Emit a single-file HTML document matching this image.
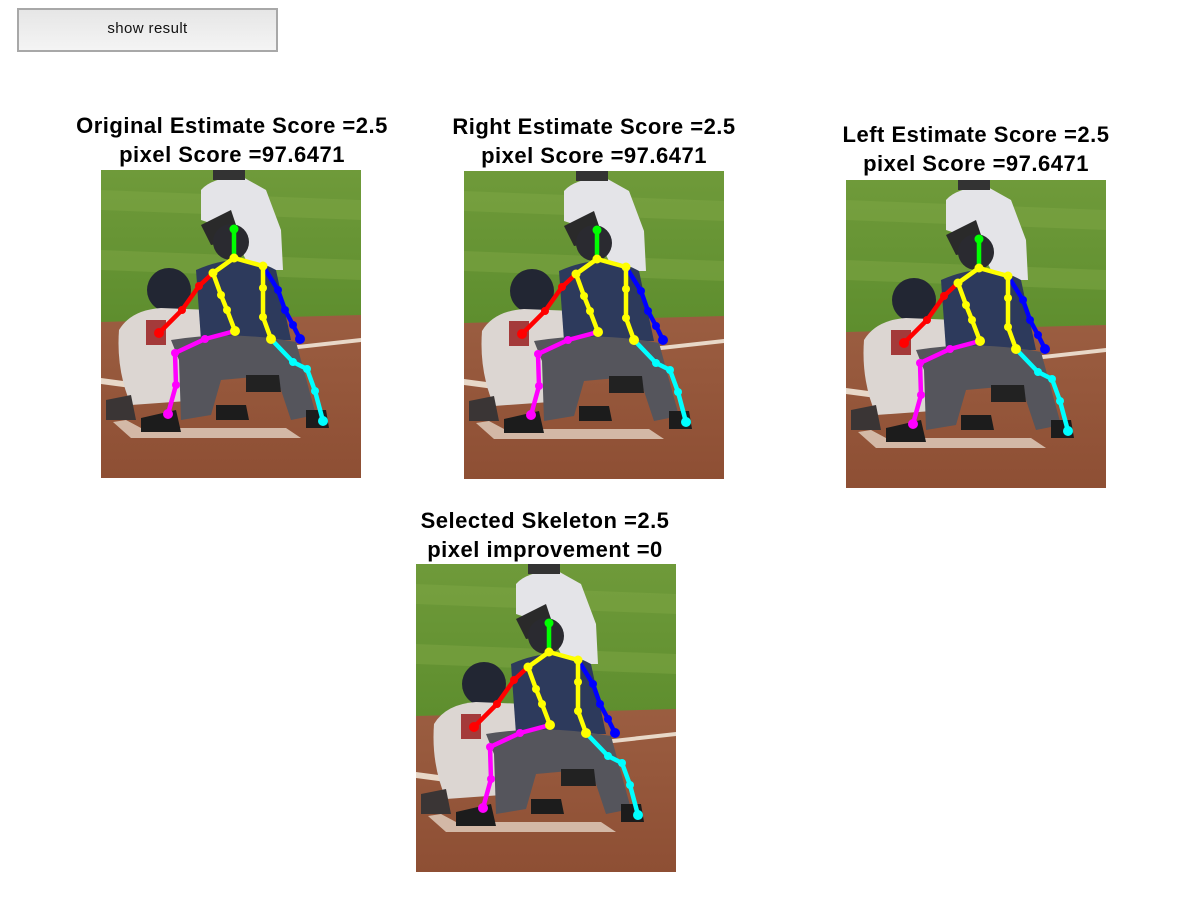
<!DOCTYPE html>
<html><head><meta charset="utf-8"><style>
body{margin:0;width:1200px;height:900px;background:#fff;position:relative;overflow:hidden;font-family:"Liberation Sans",Arial,sans-serif}
.btn{position:absolute;left:17px;top:8px;width:257px;height:40px;border:2px solid #a8a8a8;background:linear-gradient(#e6e6e6,#f4f4f4);font-size:15px;letter-spacing:0.4px;text-align:center;line-height:38px;color:#111}
.t{position:absolute;width:400px;text-align:center;font-weight:bold;font-size:22px;letter-spacing:0.5px;line-height:29px;color:#000}
svg.p{position:absolute;width:260px;height:308px}
</style></head><body>
<div class="btn">show result</div>
<svg width="0" height="0" style="position:absolute"><defs>
<symbol id="img" viewBox="0 0 260 308">
<defs>
<linearGradient id="gr" x1="0" y1="0" x2="0" y2="1"><stop offset="0" stop-color="#6f9a3a"/><stop offset="1" stop-color="#5e8e2e"/></linearGradient>
<linearGradient id="dr" x1="0" y1="0" x2="0" y2="1"><stop offset="0" stop-color="#a66a4c"/><stop offset="1" stop-color="#8e4f34"/></linearGradient>
</defs>
<rect width="260" height="308" fill="url(#dr)"/>
<path d="M0 0 H260 V145 L0 152Z" fill="url(#gr)"/>
<path d="M0 20 L260 30 L260 50 L0 40Z" fill="#7ea644" opacity=".5"/>
<path d="M0 80 L260 90 L260 110 L0 100Z" fill="#7ea644" opacity=".5"/>
<path d="M170 178 L260 168 L260 172 L170 182Z" fill="#e8d8c8"/>
<path d="M0 208 L30 212 L30 218 L0 214Z" fill="#e8d8c8"/>
<path d="M12 252 L30 268 L200 268 L185 258 L40 258 L25 250Z" fill="#e4d2c2" opacity=".8"/>
<path d="M100 20 Q110 8 140 6 L165 20 L180 60 L182 100 L150 100 L130 60 L100 50Z" fill="#e4e4e8"/>
<rect x="112" y="0" width="32" height="10" fill="#333"/>
<path d="M100 55 L130 40 L140 70 L110 75Z" fill="#2a2a2a"/>
<circle cx="68" cy="120" r="22" fill="#222633"/>
<path d="M18 160 Q30 140 60 138 L110 140 L100 230 L30 235 Q15 200 18 160Z" fill="#dcd6d2"/>
<path d="M45 150 L65 150 L65 175 L45 175Z" fill="#a43a3a"/>
<path d="M5 230 L30 225 L35 250 L5 250Z" fill="#3a3535"/>
<path d="M95 100 Q140 80 175 100 L190 170 L100 170Z" fill="#2d3a5c"/>
<circle cx="130" cy="72" r="18" fill="#2a2a30"/>
<path d="M70 170 Q130 160 195 172 L215 245 L190 250 L175 205 L120 210 L110 245 L80 250 L78 190Z" fill="#55555c"/>
<path d="M40 248 L75 240 L80 262 L40 262Z" fill="#1c1c1c"/>
<path d="M115 235 L145 235 L148 250 L115 250Z" fill="#1c1c1c"/>
<path d="M145 205 L178 205 L180 222 L145 222Z" fill="#222"/>
<path d="M205 240 L225 240 L228 258 L205 258Z" fill="#1c1c1c"/>
<g transform="translate(-1,-2)" stroke-width="4.5" stroke-linecap="round" stroke-linejoin="round" fill="none">
<polyline points="134,61 134,90" stroke="#00ff00"/>
<polyline points="113,105 99,118 82,142 59,165" stroke="#ff0000"/>
<polyline points="163,98 178,122 185,142 193,157 200,171" stroke="#0000ff"/>
<polyline points="135,163 105,171 75,185 76,217 68,246" stroke="#ff00ff"/>
<polyline points="171,171 193,194 207,201 215,223 223,253" stroke="#00ffff"/>
<polyline points="135,163 127,142 121,127 113,105 134,90 163,98 163,120 163,149 171,171" stroke="#ffff00"/>
<g stroke="none">
<circle cx="134" cy="61" r="4.5" fill="#00ff00"/>
<g fill="#ff0000"><circle cx="99" cy="118" r="4"/><circle cx="82" cy="142" r="4"/><circle cx="59" cy="165" r="5"/></g>
<g fill="#0000ff"><circle cx="178" cy="122" r="4"/><circle cx="185" cy="142" r="4"/><circle cx="193" cy="157" r="4"/><circle cx="200" cy="171" r="5"/></g>
<g fill="#ff00ff"><circle cx="105" cy="171" r="4"/><circle cx="75" cy="185" r="4"/><circle cx="76" cy="217" r="4"/><circle cx="68" cy="246" r="5"/></g>
<g fill="#00ffff"><circle cx="193" cy="194" r="4"/><circle cx="207" cy="201" r="4"/><circle cx="215" cy="223" r="4"/><circle cx="223" cy="253" r="5"/></g>
<g fill="#ffff00"><circle cx="134" cy="90" r="4.5"/><circle cx="113" cy="105" r="4.5"/><circle cx="121" cy="127" r="4"/><circle cx="127" cy="142" r="4"/><circle cx="135" cy="163" r="5"/><circle cx="163" cy="98" r="4.5"/><circle cx="163" cy="120" r="4"/><circle cx="163" cy="149" r="4"/><circle cx="171" cy="171" r="5"/></g>
</g></g>
</symbol></defs></svg>

<div class="t" style="left:32px;top:111px">Original Estimate Score =2.5<br>pixel Score =97.6471</div>
<svg class="p" style="left:101px;top:170px"><use href="#img"/></svg>

<div class="t" style="left:394px;top:112px">Right Estimate Score =2.5<br>pixel Score =97.6471</div>
<svg class="p" style="left:464px;top:171px"><use href="#img"/></svg>

<div class="t" style="left:776px;top:120px">Left Estimate Score =2.5<br>pixel Score =97.6471</div>
<svg class="p" style="left:846px;top:180px"><use href="#img"/></svg>

<div class="t" style="left:345px;top:506px">Selected Skeleton =2.5<br>pixel improvement =0</div>
<svg class="p" style="left:416px;top:564px"><use href="#img"/></svg>
</body></html>
